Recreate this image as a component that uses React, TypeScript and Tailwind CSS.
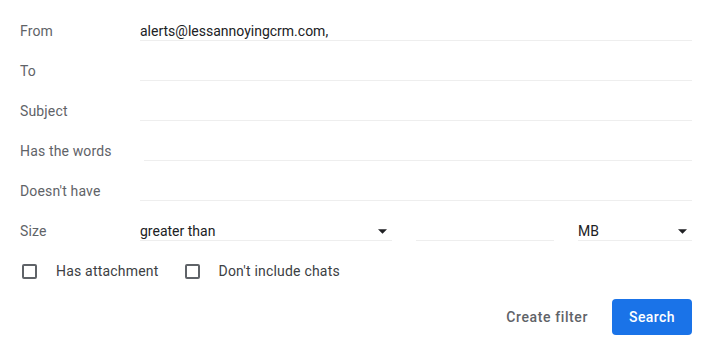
import { ReactNode } from "react";

const FONT = { fontFamily: "Roboto, 'Noto Sans', sans-serif" };

function Row({ label, children, indent = false }: { label: string; children?: ReactNode; indent?: boolean }) {
  return (
    <div className="flex h-10 items-end">
      <div className="w-[120px] shrink-0 border-b border-transparent text-[14px] leading-[18px] tracking-[0.15px] text-[#5f6368]">
        {label}
      </div>
      <div
        className={`flex-1 border-b border-[#eeeeee] text-[14px] leading-[18px] text-[#202124] ${indent ? "ml-1" : ""}`}
      >
        {children ?? "\u00a0"}
      </div>
    </div>
  );
}

function Caret() {
  return (
    <svg width="9" height="5" viewBox="0 0 10 5" aria-hidden="true" className="mr-[5px] mb-[6px]">
      <path d="M0 0h10L5 5z" fill="#202124" />
    </svg>
  );
}

function Checkbox({ label }: { label: string }) {
  return (
    <label className="flex items-center">
      <span className="ml-[2px] h-[15px] w-[15px] rounded-[2px] border-2 border-[#5f6368]" />
      <span className="ml-[19px] text-[14px] tracking-[0.2px] text-[#3c4043]">{label}</span>
    </label>
  );
}

export default function App() {
  return (
    <div className="h-[353px] w-[714px] bg-white pl-5 pr-[22px] pt-px" style={FONT}>
      <Row label="From">alerts@lessannoyingcrm.com,</Row>
      <Row label="To" />
      <Row label="Subject" />
      <Row label="Has the words" indent />
      <Row label="Doesn't have" />

      {/* Size row */}
      <div className="flex h-10 items-end">
        <div className="w-[120px] shrink-0 border-b border-transparent text-[14px] leading-[18px] tracking-[0.15px] text-[#5f6368]">
          Size
        </div>
        <div className="flex w-[252px] items-end justify-between border-b border-[#eeeeee] text-[14px] leading-[18px] text-[#202124]">
          <span>greater than</span>
          <Caret />
        </div>
        <div className="ml-6 w-[138px] border-b border-[#eeeeee] text-[14px] leading-[18px]">{"\u00a0"}</div>
        <div className="ml-6 flex flex-1 items-end justify-between border-b border-[#eeeeee] text-[14px] leading-[18px] text-[#202124]">
          <span>MB</span>
          <Caret />
        </div>
      </div>

      {/* Options */}
      <div className="mt-[10px] flex h-10 items-center gap-[24px]">
        <Checkbox label="Has attachment" />
        <Checkbox label="Don't include chats" />
      </div>

      {/* Actions */}
      <div className="mt-2 flex justify-end gap-2">
        <button className="h-9 rounded px-4 text-[14px] font-medium tracking-[0.6px] text-[#5f6368]">
          Create filter
        </button>
        <button className="h-9 w-20 rounded bg-[#1a73e8] text-[14px] font-medium tracking-[0.4px] text-white">
          Search
        </button>
      </div>
    </div>
  );
}
